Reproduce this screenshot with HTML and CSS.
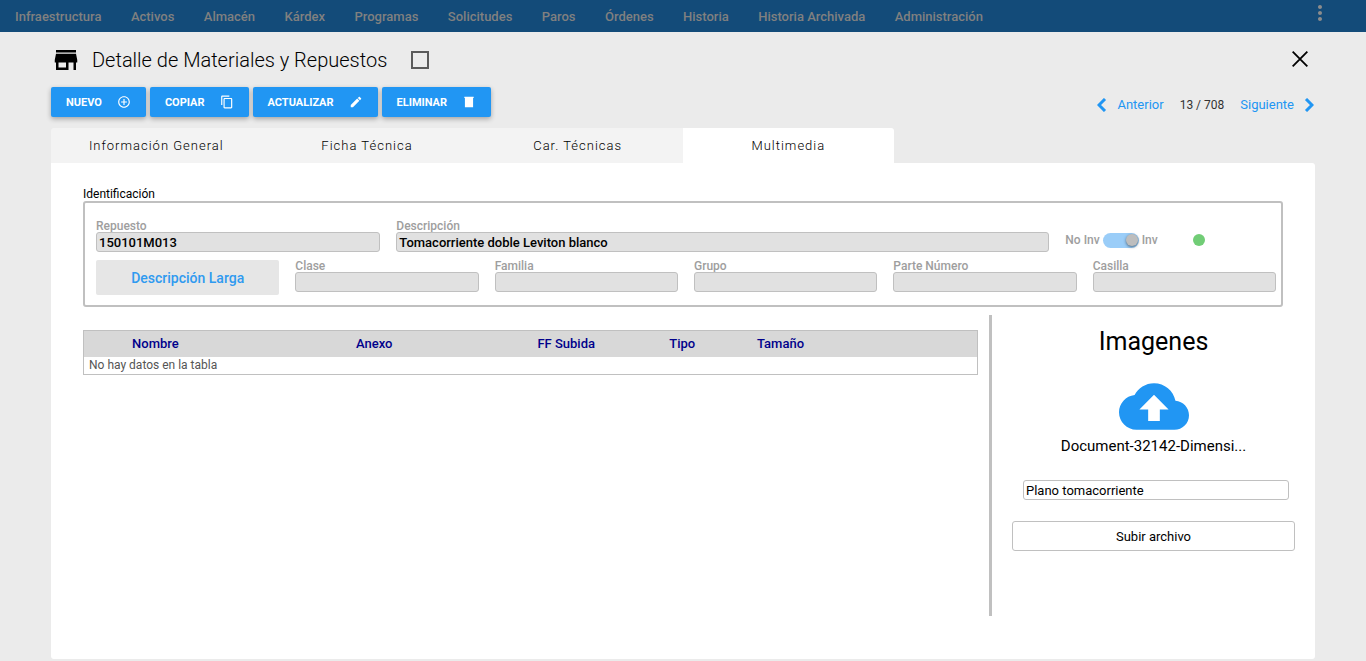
FILE: index.html
```html
<!DOCTYPE html>
<html lang="es">
<head>
    <meta charset="UTF-8">
    <meta name="viewport" content="width=device-width, initial-scale=1.0">
    <title>Detalle de Materiales y Repuestos</title>
    <link rel="stylesheet" href="styles.css">
</head>
<body>
    <nav class="navbar">
        <ul class="nav-menu">
            <li><a href="#">Infraestructura</a></li>
            <li><a href="#">Activos</a></li>
            <li><a href="#">Almacén</a></li>
            <li><a href="#">Kárdex</a></li>
            <li><a href="#">Programas</a></li>
            <li><a href="#">Solicitudes</a></li>
            <li><a href="#">Paros</a></li>
            <li><a href="#">Órdenes</a></li>
            <li><a href="#">Historia</a></li>
            <li><a href="#">Historia Archivada</a></li>
            <li><a href="#">Administración</a></li>
        </ul>
        <button type="button" class="nav-more" aria-label="Más opciones">
            <svg viewBox="0 0 24 24"><path d="M12 8c1.1 0 2-.9 2-2s-.9-2-2-2-2 .9-2 2 .9 2 2 2zm0 2c-1.1 0-2 .9-2 2s.9 2 2 2 2-.9 2-2-.9-2-2-2zm0 6c-1.1 0-2 .9-2 2s.9 2 2 2 2-.9 2-2-.9-2-2-2z"/></svg>
        </button>
    </nav>

    <main class="container">
        <header class="page-header">
            <svg class="title-icon" viewBox="0 0 24 24"><path d="M20 4H4v2h16V4zm1 10v-2l-1-5H4l-1 5v2h1v6h10v-6h4v6h2v-6h1zm-9 4H6v-4h6v4z"/></svg>
            <h1>Detalle de Materiales y Repuestos</h1>
            <input type="checkbox" class="title-check" aria-label="Seleccionar">
            <button type="button" class="close-btn" aria-label="Cerrar">
                <svg viewBox="0 0 24 24"><path d="M4 4l16 16M20 4L4 20"/></svg>
            </button>
        </header>

        <div class="toolbar">
            <div class="actions">
                <button type="button" class="btn">NUEVO
                    <svg viewBox="0 0 24 24"><path d="M13 7h-2v4H7v2h4v4h2v-4h4v-2h-4V7zm-1-5C6.48 2 2 6.48 2 12s4.48 10 10 10 10-4.48 10-10S17.52 2 12 2zm0 18c-4.41 0-8-3.59-8-8s3.59-8 8-8 8 3.59 8 8-3.59 8-8 8z"/></svg>
                </button>
                <button type="button" class="btn">COPIAR
                    <svg viewBox="0 0 24 24"><path d="M16 1H4c-1.1 0-2 .9-2 2v14h2V3h12V1zm3 4H8c-1.1 0-2 .9-2 2v14c0 1.1.9 2 2 2h11c1.1 0 2-.9 2-2V7c0-1.1-.9-2-2-2zm0 16H8V7h11v14z"/></svg>
                </button>
                <button type="button" class="btn">ACTUALIZAR
                    <svg viewBox="0 0 24 24"><path d="M3 17.25V21h3.75L17.81 9.94l-3.75-3.75L3 17.25zM20.71 7.04c.39-.39.39-1.02 0-1.41l-2.34-2.34c-.39-.39-1.02-.39-1.41 0l-1.83 1.83 3.75 3.75 1.83-1.83z"/></svg>
                </button>
                <button type="button" class="btn">ELIMINAR
                    <svg viewBox="0 0 24 24"><path d="M5 21h14V5H5v16zM20 3H4v2h16V3z"/></svg>
                </button>
            </div>
            <div class="pager">
                <a href="#">
                    <svg viewBox="0 0 10 14"><path d="M8 1L2 7l6 6"/></svg>
                    Anterior
                </a>
                <span>13 / 708</span>
                <a href="#">
                    Siguiente
                    <svg viewBox="0 0 10 14"><path d="M2 1l6 6-6 6"/></svg>
                </a>
            </div>
        </div>

        <div class="tabs" role="tablist">
            <button type="button" class="tab" role="tab">Información General</button>
            <button type="button" class="tab" role="tab">Ficha Técnica</button>
            <button type="button" class="tab" role="tab">Car. Técnicas</button>
            <button type="button" class="tab active" role="tab" aria-selected="true">Multimedia</button>
        </div>

        <div class="panel">
            <h2 class="section-title">Identificación</h2>
            <form class="ident-box">
                <div class="ident-row main-row">
                    <div class="field">
                        <label for="repuesto">Repuesto</label>
                        <input type="text" id="repuesto" value="150101M013" readonly>
                    </div>
                    <div class="field">
                        <label for="descripcion">Descripción</label>
                        <input type="text" id="descripcion" value="Tomacorriente doble Leviton blanco" readonly>
                    </div>
                    <div class="status">
                        <label class="switch">
                            No Inv
                            <input type="checkbox" checked disabled>
                            Inv
                        </label>
                        <span class="status-dot"></span>
                    </div>
                </div>
                <div class="ident-row">
                    <button type="button" class="btn-desc">Descripción Larga</button>
                    <div class="field">
                        <label for="clase">Clase</label>
                        <input type="text" id="clase" readonly>
                    </div>
                    <div class="field">
                        <label for="familia">Familia</label>
                        <input type="text" id="familia" readonly>
                    </div>
                    <div class="field">
                        <label for="grupo">Grupo</label>
                        <input type="text" id="grupo" readonly>
                    </div>
                    <div class="field">
                        <label for="parte-numero">Parte Número</label>
                        <input type="text" id="parte-numero" readonly>
                    </div>
                    <div class="field">
                        <label for="casilla">Casilla</label>
                        <input type="text" id="casilla" readonly>
                    </div>
                </div>
            </form>

            <div class="media">
                <div class="media-list">
                    <table>
                        <colgroup>
                            <col class="col-nombre">
                            <col class="col-anexo">
                            <col class="col-fecha">
                            <col class="col-tipo">
                            <col class="col-tamano">
                            <col>
                        </colgroup>
                        <thead>
                            <tr>
                                <th>Nombre</th>
                                <th>Anexo</th>
                                <th>FF Subida</th>
                                <th>Tipo</th>
                                <th>Tamaño</th>
                                <th></th>
                            </tr>
                        </thead>
                        <tbody>
                            <tr>
                                <td colspan="6">No hay datos en la tabla</td>
                            </tr>
                        </tbody>
                    </table>
                </div>

                <aside class="upload">
                    <h2>Imagenes</h2>
                    <svg class="cloud" viewBox="0 4 24 16"><path d="M19.35 10.04C18.67 6.59 15.64 4 12 4 9.11 4 6.6 5.64 5.35 8.04 2.34 8.36 0 10.91 0 14c0 3.31 2.69 6 6 6h13c2.76 0 5-2.24 5-5 0-2.64-2.05-4.78-4.65-4.96zM14 13v4h-4v-4H7l5-5 5 5h-3z"/></svg>
                    <p class="file-name">Document-32142-Dimensi...</p>
                    <input type="text" class="file-desc" value="Plano tomacorriente" aria-label="Descripción del archivo">
                    <button type="button" class="btn-upload">Subir archivo</button>
                </aside>
            </div>
        </div>
    </main>
</body>
</html>
```
FILE: styles.css
```css
* {
    box-sizing: border-box;
}

body {
    font-family: Roboto, "Liberation Sans", sans-serif;
    font-size: 13px;
    margin: 0;
    min-height: 100vh;
    display: flex;
    flex-direction: column;
    background-color: #ebebeb;
    color: #000;
}

h1, h2, p {
    margin: 0;
    font-weight: 400;
}

button, input {
    font-family: inherit;
    margin: 0;
}

button {
    border: none;
    padding: 0;
    cursor: pointer;
}

a {
    text-decoration: none;
}

/* Barra superior */
.navbar {
    height: 32px;
    display: flex;
    justify-content: space-between;
    padding: 0 34px 0 15px;
    background-color: #134b79;
}

.nav-menu {
    list-style: none;
    margin: 0;
    padding: 0;
    display: flex;
    flex: 0 1 968px;
    justify-content: space-between;
}

.nav-menu a {
    color: #808080;
    font-weight: 500;
    line-height: 34px;
}

.nav-more {
    background: none;
    height: 26px;
}

.nav-more svg {
    display: block;
    width: 24px;
    height: 24px;
    fill: #8c8c8c;
}

/* Encabezado */
.container {
    flex: 1;
    display: flex;
    flex-direction: column;
    padding: 12px 51px 2px;
}

.page-header {
    display: flex;
    align-items: center;
    height: 32px;
}

.title-icon {
    width: 30px;
    height: 30px;
}

.page-header h1 {
    margin: 0 24px 0 11px;
    font-size: 20px;
    font-weight: 300;
}

.title-check {
    appearance: none;
    width: 18px;
    height: 18px;
    border: 2px solid #5a5a5a;
}

.close-btn {
    margin-left: auto;
    padding: 0 4px 2px 0;
    background: none;
}

.close-btn svg {
    display: block;
    width: 22px;
    height: 22px;
    stroke: #000;
    stroke-width: 2;
}

.toolbar {
    display: flex;
    justify-content: space-between;
    margin: 11px 0;
}

.actions {
    display: flex;
    gap: 4px;
}

.btn {
    display: flex;
    align-items: center;
    gap: 15px;
    height: 30px;
    padding: 0 15px;
    background-color: #2196f3;
    color: white;
    font-size: 11px;
    font-weight: 700;
    border-radius: 2px;
    box-shadow: 0 2px 5px rgba(0, 0, 0, 0.3);
}

.btn svg {
    width: 14px;
    height: 14px;
    fill: white;
}

.pager {
    display: flex;
    align-items: center;
    gap: 16px;
    padding: 5px 1px 0 0;
    color: #333;
    font-size: 12px;
}

.pager a {
    display: flex;
    align-items: center;
    gap: 10px;
    color: #2196f3;
    font-size: 13px;
}

.pager svg {
    width: 10px;
    height: 14px;
    fill: none;
    stroke: #2196f3;
    stroke-width: 3;
}

/* Pestañas */
.tabs {
    display: grid;
    grid-template-columns: repeat(6, 1fr);
}

.tab {
    height: 35px;
    background-color: #f3f3f3;
    color: #000;
    font-size: 13px;
    font-weight: 300;
    letter-spacing: 1px;
}

.tab:first-child {
    border-radius: 3px 0 0 0;
}

.tab.active {
    background-color: white;
    border-radius: 0 3px 0 0;
}

.panel {
    flex: 1;
    padding: 24px 0 40px 32px;
    background-color: white;
    border-radius: 0 3px 3px 3px;
}

.section-title {
    font-size: 12px;
    line-height: 14px;
}

/* Identificación */
.ident-box {
    display: flex;
    flex-direction: column;
    gap: 8px;
    margin-right: 32px;
    padding: 17px 5px 10px 11px;
    border: 2px solid #c0c0c0;
    border-radius: 3px;
}

.ident-row {
    display: grid;
    grid-template-columns: repeat(6, 1fr);
    gap: 16px;
}

.main-row {
    grid-template-columns: 27fr 62fr 20fr;
}

.field {
    display: flex;
    flex-direction: column;
}

.field label, .switch {
    color: #9e9e9e;
    font-size: 12px;
    font-weight: 500;
    line-height: 12px;
}

.field input {
    width: 100%;
    height: 20px;
    padding: 0 2px;
    border: 1px solid #c0c0c0;
    border-radius: 3px;
    background-color: #e1e1e1;
    color: #000;
    font-size: 13px;
    font-weight: 500;
}

.status {
    display: flex;
    align-items: center;
    gap: 35px;
    padding-top: 8px;
}

.switch {
    display: flex;
    align-items: center;
    gap: 3px;
}

.switch input {
    appearance: none;
    display: flex;
    justify-content: flex-end;
    width: 36px;
    height: 15px;
    padding: 1px;
    border-radius: 8px;
    background-color: #9acdf8;
}

.switch input::before {
    content: "";
    width: 12px;
    height: 12px;
    border-radius: 50%;
    background-color: #bdbdbd;
    box-shadow: 0 1px 3px rgba(0, 0, 0, 0.5);
}

.status-dot {
    width: 12px;
    height: 12px;
    border-radius: 50%;
    background-color: #71cd76;
}

.btn-desc {
    height: 35px;
    background-color: #e6e6e6;
    color: #2f9af0;
    font-size: 14px;
    font-weight: 500;
    border-radius: 2px;
}

/* Multimedia */
.media {
    display: flex;
    gap: 11px;
    margin-top: 8px;
}

.media-list {
    flex: 1;
    padding-top: 15px;
}

table {
    width: 100%;
    table-layout: fixed;
    border-spacing: 0;
    border: 1px solid #c0c0c0;
}

.col-nombre {
    width: 16%;
}

.col-anexo {
    width: 33%;
}

.col-fecha {
    width: 10%;
}

.col-tipo {
    width: 16%;
}

.col-tamano {
    width: 6%;
}

th {
    height: 26px;
    padding: 0 0 1px;
    background-color: #d8d8d8;
    color: #00008b;
    font-weight: 500;
}

td {
    padding: 1px 5px 2px;
    color: #555;
    font-size: 12px;
}

.upload {
    flex: 0 0 326px;
    display: flex;
    flex-direction: column;
    min-height: 301px;
    padding: 12px 20px 0;
    border-left: 3px solid #c0c0c0;
}

.upload h2 {
    font-size: 25px;
    line-height: 30px;
    text-align: center;
}

.cloud {
    align-self: center;
    width: 70px;
    height: 47px;
    margin-top: 26px;
    fill: #2196f3;
}

.file-name {
    margin: 8px 0 26px;
    font-size: 15px;
    line-height: 16px;
    text-align: center;
}

.file-desc {
    height: 20px;
    margin: 0 6px 0 11px;
    padding: 0 2px;
    border: 1px solid #c0c0c0;
    border-radius: 3px;
    font-size: 13px;
}

.btn-upload {
    height: 30px;
    margin-top: 21px;
    border: 1px solid #c0c0c0;
    border-radius: 3px;
    background-color: white;
    font-size: 13px;
}
```
